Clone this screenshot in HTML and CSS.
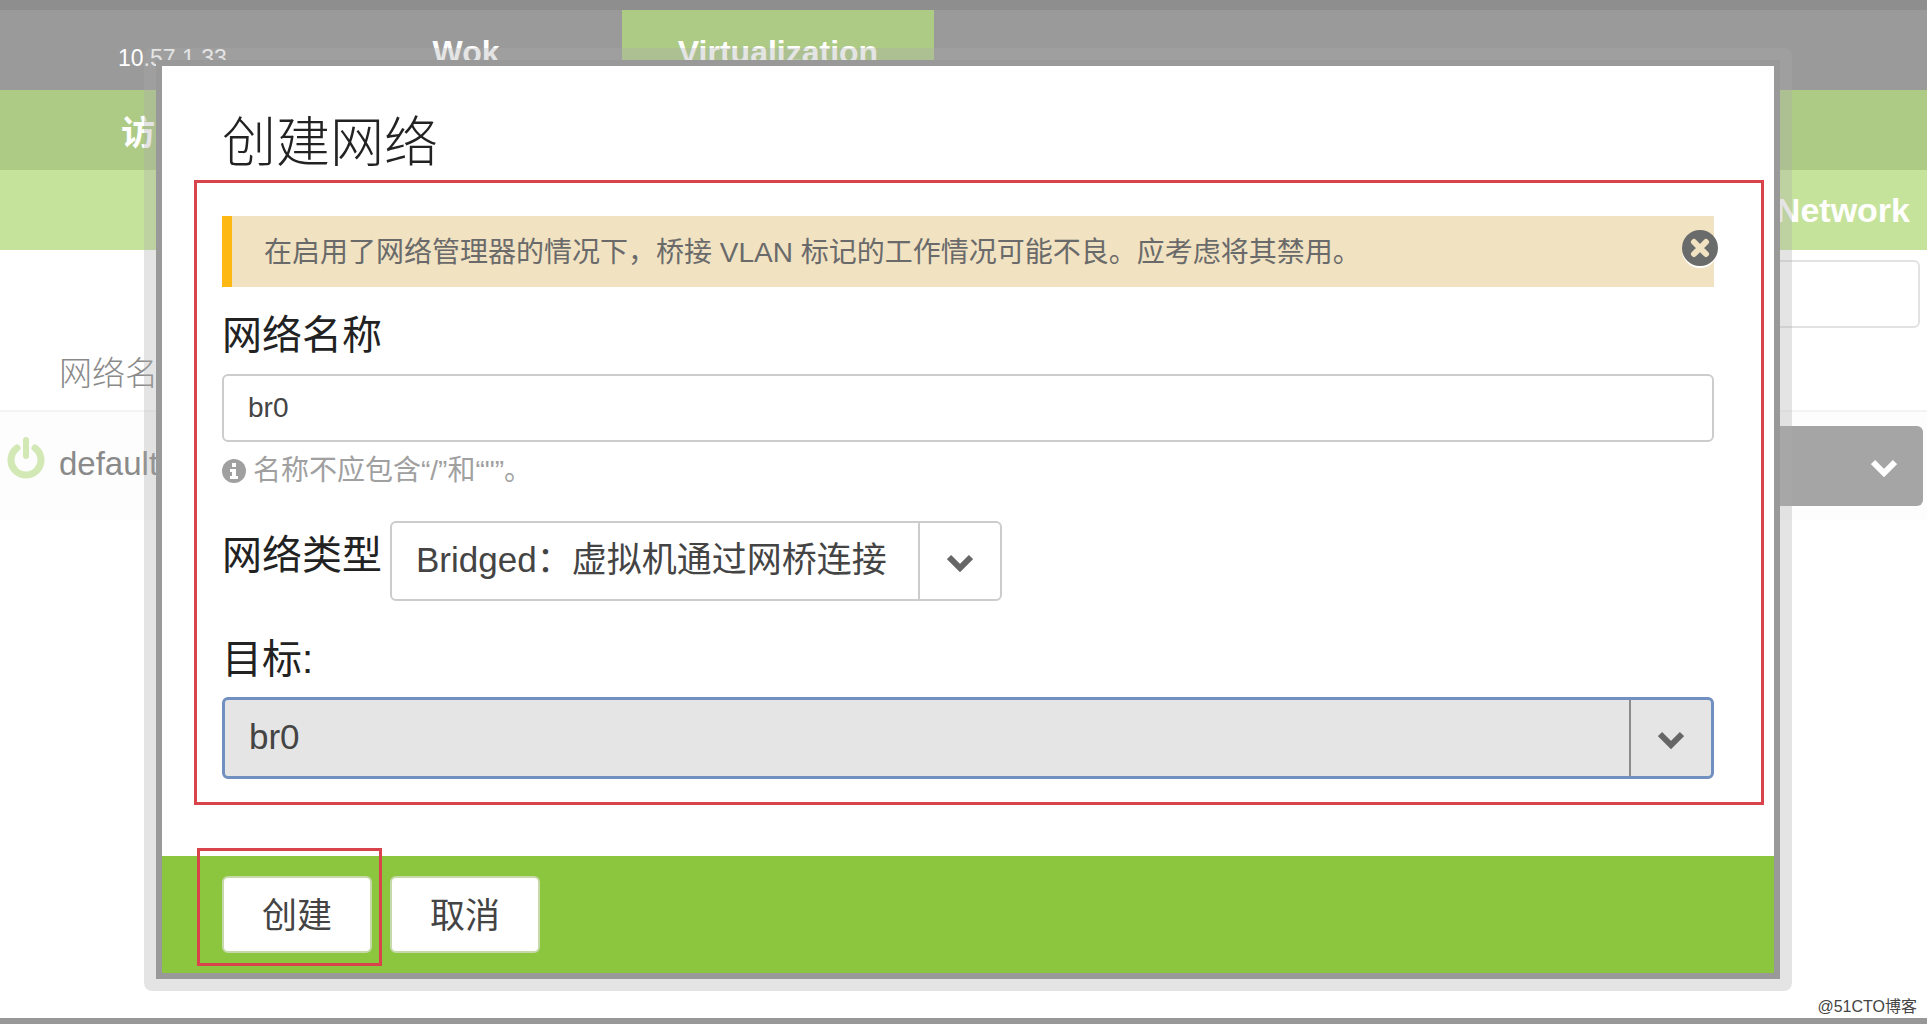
FILE: index.html
```html
<!DOCTYPE html>
<html lang="zh-CN">
<head>
  <meta charset="UTF-8">
  <meta name="viewport" content="width=device-width, initial-scale=1.0">
  <title>Wok - Virtualization</title>
  <link rel="stylesheet" href="styles.css">
</head>
<body>
  <!-- pagina de fondo -->
  <div class="page">
    <header class="topbar">
      <span class="host">10.57.1.33</span>
      <nav class="tabs">
        <a class="tab" href="#wok">Wok</a>
        <a class="tab active" href="#virtualization">Virtualization</a>
      </nav>
    </header>
    <nav class="subnav"><a href="#guests">访客</a></nav>
    <div class="toolbar"><a href="#network">Network</a></div>
    <main class="networks">
      <div class="filter"><input type="search" aria-label="过滤"></div>
      <div class="networks-head">网络名称</div>
      <div class="networks-row">
        <svg class="power" viewBox="0 0 38 42" aria-hidden="true">
          <path d="M10 11a15 15 0 1 0 18 0" fill="none" stroke="#d2e9b5" stroke-width="7" stroke-linecap="round"/>
          <path d="M19 3v16" stroke="#d2e9b5" stroke-width="6" stroke-linecap="round"/>
        </svg>
        <span class="network-name">default</span>
        <button class="actions" type="button" aria-label="操作">
          <svg class="chevron" viewBox="0 0 26 18" aria-hidden="true"><path d="M2 3l11 11L24 3" fill="none" stroke="currentColor" stroke-width="6"/></svg>
        </button>
      </div>
    </main>
    <footer class="page-foot"><span class="credit">@51CTO博客</span></footer>
  </div>

  <!-- modal -->
  <div class="modal">
    <form class="modal-content">
      <h1 class="modal-title">创建网络</h1>
      <div class="modal-body">
        <div class="alert" role="alert">
          <p>在启用了网络管理器的情况下，桥接 VLAN 标记的工作情况可能不良。应考虑将其禁用。</p>
          <button class="close" type="button" aria-label="关闭">
            <svg viewBox="0 0 36 36" aria-hidden="true">
              <circle cx="18" cy="18" r="18" fill="#6a6c6b"/>
              <path d="M12 12l12 12M24 12L12 24" stroke="#f1e2c2" stroke-width="6" stroke-linecap="round"/>
            </svg>
          </button>
        </div>

        <label class="label" for="name">网络名称</label>
        <input class="text" id="name" type="text" value="br0">
        <p class="help">
          <svg viewBox="0 0 24 24" aria-hidden="true">
            <circle cx="12" cy="12" r="12" fill="#a0a0a0"/>
            <path d="M10 4h4v4h-4zM8 10h6v7h2v3H8v-3h2v-4H8z" fill="#fff"/>
          </svg>
          <span>名称不应包含“/”和“"”。</span>
        </p>

        <div class="type-row">
          <label class="label" for="type">网络类型</label>
          <div class="select">
            <select id="type">
              <option>Bridged：虚拟机通过网桥连接</option>
            </select>
            <span class="caret"><svg class="chevron" viewBox="0 0 26 18" aria-hidden="true"><path d="M2 3l11 11L24 3" fill="none" stroke="currentColor" stroke-width="6"/></svg></span>
          </div>
        </div>

        <label class="label" for="target">目标:</label>
        <div class="select select-open">
          <select id="target">
            <option>br0</option>
          </select>
          <span class="caret"><svg class="chevron" viewBox="0 0 26 18" aria-hidden="true"><path d="M2 3l11 11L24 3" fill="none" stroke="currentColor" stroke-width="6"/></svg></span>
        </div>
      </div>
      <div class="modal-footer">
        <div class="marked"><button class="btn" type="submit">创建</button></div>
        <button class="btn" type="button">取消</button>
      </div>
    </form>
  </div>
</body>
</html>
```
FILE: styles.css
```css
*{
  margin: 0;
  padding: 0;
  box-sizing: border-box;
}

:root{
  --green: #8cc63f;
  --mark: #d8434c;
  --text: #444;
  --ui: "Liberation Sans", "Noto Sans CJK SC", sans-serif;
}

body{
  background-color: #fff;
  color: var(--text);
  font-family: var(--ui);
}

a{
  color: #fff;
  font-weight: bold;
  text-decoration: none;
}

button,
input,
select{
  font-family: inherit;
  color: inherit;
}

svg{
  display: block;
}

/* pagina de fondo */
.page{
  display: flex;
  flex-direction: column;
  min-height: 100vh;
}

.topbar{
  display: flex;
  height: 90px;
  border-top: 10px solid #8e8e8e;
  background-color: #9a9a9a;
  color: #fff;
}

.host{
  width: 310px;
  padding: 35px 0 0 118px;
  font-size: 23px;
  line-height: 26px;
}

.tabs{
  display: flex;
}

.tab{
  width: 312px;
  padding-top: 22px;
  font-size: 32px;
  line-height: 40px;
  text-align: center;
}

.tab.active{
  background-color: #aecb86;
}

.subnav,
.toolbar{
  display: flex;
  align-items: center;
  height: 80px;
  font-size: 34px;
}

.subnav{
  padding-left: 121px;
  background-color: #aecb86;
}

.toolbar{
  justify-content: flex-end;
  padding-right: 17px;
  background-color: #c6e39c;
}

.networks{
  flex: 1;
}

.filter{
  display: flex;
  justify-content: flex-end;
  padding: 10px 7px 0;
}

.filter input{
  width: 400px;
  height: 68px;
  border: 2px solid #e2e2e2;
  border-radius: 6px;
}

.networks-head{
  padding: 27px 59px 17px;
  border-bottom: 2px solid #f4f4f4;
  font-size: 33px;
  font-weight: 300;
  line-height: 38px;
  color: #8a8a8a;
}

.networks-row{
  display: flex;
  align-items: center;
  height: 108px;
  padding: 0 4px 0 7px;
  background-color: #fdfdfd;
}

.power{
  width: 38px;
  height: 42px;
  margin-bottom: 16px;
}

.network-name{
  flex: 1;
  padding: 0 0 4px 14px;
  font-size: 33px;
  color: #8a8a8a;
}

.actions{
  display: flex;
  align-items: center;
  justify-content: flex-end;
  width: 300px;
  height: 80px;
  padding: 4px 26px 0 0;
  border: 0;
  border-radius: 6px;
  background-color: #a5a5a5;
  color: #fff;
}

.chevron{
  width: 26px;
  height: 18px;
}

.page-foot{
  display: flex;
  justify-content: flex-end;
  padding: 0 10px;
  border-bottom: 6px solid #989898;
}

.credit{
  font-size: 16px;
  line-height: 22px;
}

/* modal */
.modal{
  position: absolute;
  top: 48px;
  left: 144px;
  right: 135px;
  padding: 12px;
  border-radius: 8px;
  background-color: rgba(170, 170, 170, 0.32);
}

.modal-content{
  border: 6px solid #999;
  background-color: #fff;
}

.modal-title{
  padding: 40px 60px 0;
  font-size: 54px;
  font-weight: 300;
  line-height: 74px;
  color: #222;
}

.modal-body{
  margin: 0 10px 51px 32px;
  padding: 33px 47px 23px 25px;
  border: 3px solid var(--mark);
}

/* aviso */
.alert{
  display: flex;
  align-items: center;
  height: 71px;
  margin-bottom: 20px;
  padding-left: 32px;
  border-left: 10px solid #fdb813;
  background-color: #f1e2c2;
  font-size: 28px;
  color: #6a6a6a;
}

.alert p{
  flex: 1;
  padding-bottom: 4px;
}

.close{
  width: 36px;
  height: 36px;
  margin: 0 -4px 8px 0;
  border: 0;
  border-radius: 50%;
  background: none;
  box-shadow: 0 2px 0 #fff;
}

/* campos */
.label{
  display: block;
  font-size: 40px;
  line-height: 56px;
  color: #222;
}

.text{
  display: block;
  width: 100%;
  height: 68px;
  margin-top: 11px;
  padding: 0 24px;
  border: 2px solid #ccc;
  border-radius: 6px;
  font-size: 28px;
}

.help{
  display: flex;
  align-items: center;
  gap: 7px;
  margin-top: 9px;
  font-size: 28px;
  line-height: 40px;
  color: #a0a0a0;
}

.help svg{
  width: 24px;
  height: 24px;
}

.type-row{
  display: flex;
  align-items: center;
  gap: 8px;
  margin: 30px 0;
}

.type-row .label{
  padding-bottom: 12px;
}

.type-row .select{
  width: 612px;
}

.select{
  display: flex;
  position: relative;
  height: 80px;
  border: 2px solid #ccc;
  border-radius: 6px;
  background-color: #fff;
}

.select select{
  width: 100%;
  padding: 0 96px 3px 24px;
  border: 0;
  outline: 0;
  background: none;
  font-size: 35px;
  appearance: none;
}

/* flecha encima del select */
.caret{
  display: flex;
  position: absolute;
  top: 0;
  right: 0;
  bottom: 0;
  align-items: center;
  justify-content: center;
  width: 82px;
  padding-top: 4px;
  border-left: 2px solid #ccc;
  color: #666;
  pointer-events: none;
}

.select-open{
  height: 82px;
  margin-top: 10px;
  border: 3px solid #7090c0;
  background-color: #e5e5e5;
}

.select-open .caret{
  border-color: #8c8c8c;
}

/* botones */
.modal-footer{
  display: flex;
  align-items: center;
  gap: 8px;
  height: 117px;
  padding-left: 35px;
  background-color: var(--green);
}

.marked{
  margin-top: -15px;
  padding: 25px 7px 10px 22px;
  border: 3px solid var(--mark);
}

.btn{
  display: block;
  width: 150px;
  height: 77px;
  padding-bottom: 5px;
  border: 2px solid #c6d9a8;
  border-radius: 6px;
  background-color: #fff;
  font-size: 35px;
}
```
